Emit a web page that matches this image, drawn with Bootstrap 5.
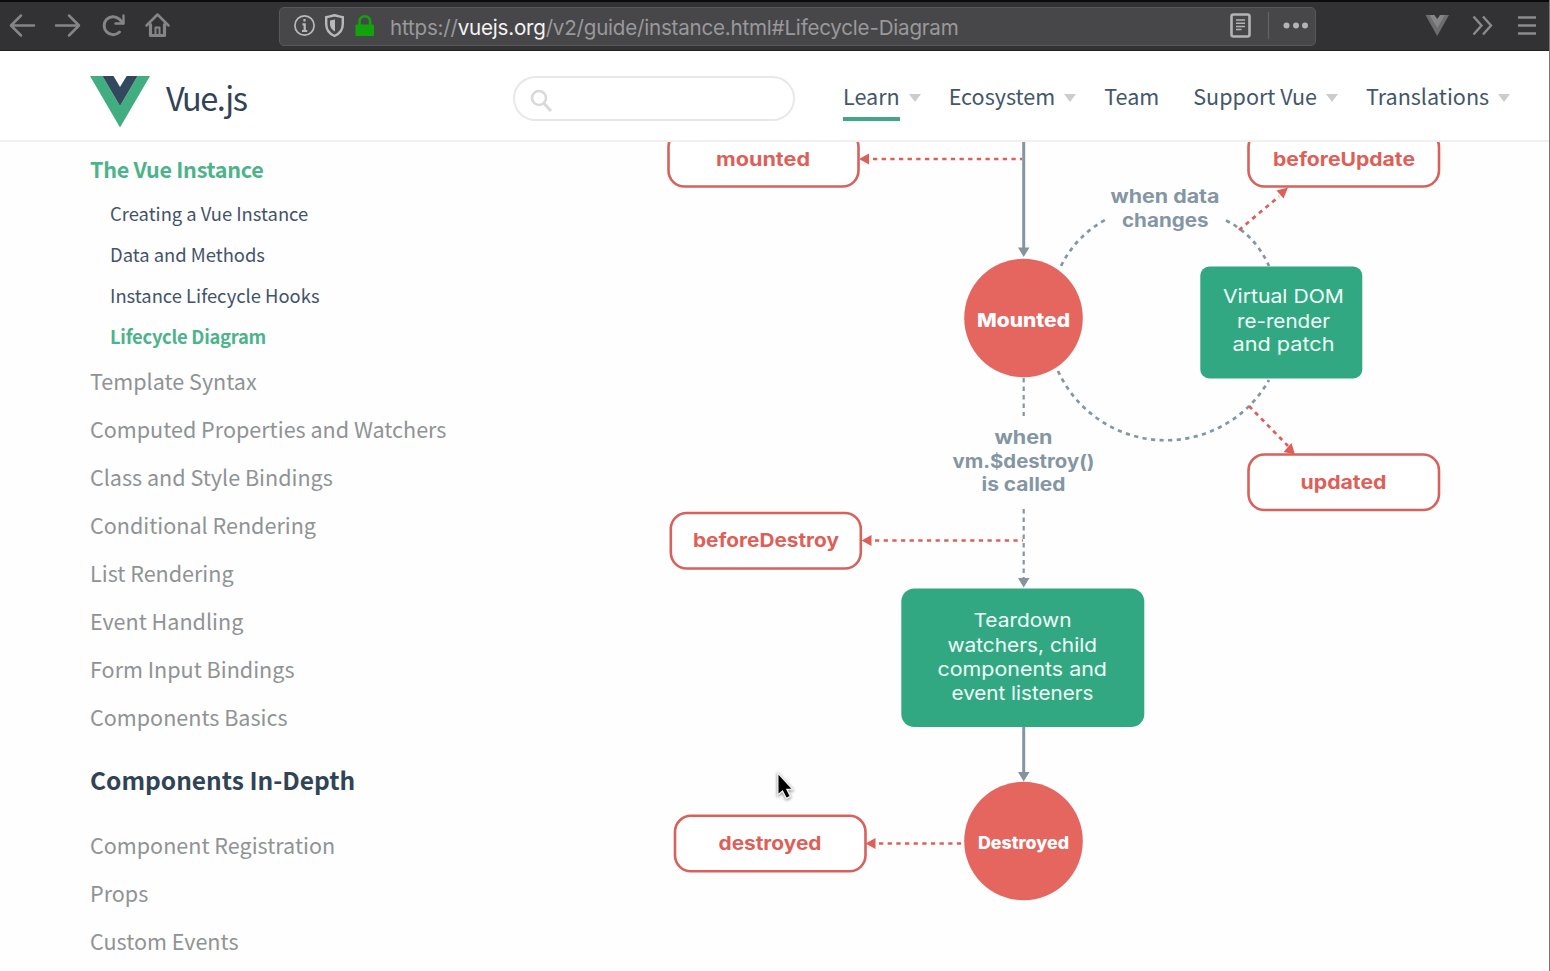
<!DOCTYPE html>
<html lang="en">
<head>
<meta charset="utf-8">
<meta name="viewport" content="width=device-width, initial-scale=1">
<title>The Vue Instance — Vue.js</title>
<link href="https://cdn.jsdelivr.net/npm/bootstrap@5.3.0/dist/css/bootstrap.min.css" rel="stylesheet">
<style>
  body { width: 1550px; height: 971px; overflow: hidden; background: #fefefe; font-family: "Noto Sans CJK SC", "Source Sans Pro", sans-serif; color: #304455; }
  a { text-decoration: none; color: inherit; }
  svg { display: block; flex: none; }
  .page-frame { height: 971px; border-right: 1px solid #77777a; }
  .chrome-bar { height: 51px; background: #323235; border-top: 2px solid #0b0b0d; border-bottom: 1px solid #222224; padding-left: 9px; }
  .url-field { width: 1037px; height: 39px; background: #474749; border: 1px solid #58585a; border-radius: 5px; font: 20.6px/36px Inter, sans-serif; color: #99999b; margin-left: 107px; padding-left: 13px; padding-right: 5px; }
  .url-field strong { color: #f4f4f4; font-weight: 400; }
  .url-text { margin-left: 15px; padding-top: 3px; letter-spacing: -0.22px; }
  .site-bar { height: 91px; background: #fff; border-bottom: 2px solid #f0f0f0; padding-left: 90px; }
  .site-bar .logo { margin-top: 12px; }
  .brand-name { font: 32.5px/50px "Noto Sans CJK SC", sans-serif; letter-spacing: -1.5px; margin-left: 16px; width: 100px; padding-top: 3px; }
  .search-pill { width: 282px; height: 45px; border: 2px solid #e8e8e8; border-radius: 23px; padding: 4px 0 0 15px; margin-left: 247px; margin-top: 6px; }
  .top-links { margin: 6px 0 0 48px; color: #43566a; }
  .top-link { font-size: 21.55px; line-height: 38px; height: 44px; border-bottom: 4px solid transparent; white-space: nowrap; }
  .top-link.current { border-color: #42a883; }
  .top-link.plain { margin-right: 34px; }
  .caret-down { width: 0; height: 0; border: 6px solid transparent; border-top: 8px solid #ccc; border-bottom: 0; margin: 0 28px 2px 9px; }
  .side-menu { width: 620px; padding: 4px 0 0 90px; font-size: 21.55px; color: #8f9394; }
  .side-menu a { display: block; height: 48px; line-height: 46px; white-space: nowrap; }
  .side-menu a.sub { height: 41px; line-height: 39px; font-size: 18.4px; padding-left: 20px; color: #43536a; }
  .side-menu a.on { color: #4db38b; font-weight: 700; letter-spacing: -0.27px; }
  .side-menu h3 { height: 80px; line-height: 76px; font-size: 24.5px; font-weight: 700; color: #304455; margin: 0; }
  .lifecycle text { font: 400 19px Inter, sans-serif; fill: #effff8; }
  .lifecycle .hook text, .lifecycle .state text, .lifecycle .note text { font-weight: 700; font-size: 18.8px; }
  .lifecycle .hook text { fill: #de5f58; }
  .lifecycle .state text { fill: #fff; font-weight: 800; }
  .lifecycle .state text.tight { font-size: 17px; }
  .lifecycle .note text { fill: #8496a3; }
  .pointer { filter: drop-shadow(0 1px 1.5px #0007); }
</style>
<script src="https://cdn.jsdelivr.net/npm/bootstrap@5.3.0/dist/js/bootstrap.bundle.min.js"></script>
</head>
<body>
<div class="page-frame d-flex flex-column">

  <header class="chrome-bar d-flex align-items-center">
    <svg width="163" height="34" viewBox="9 9 163 34" fill="none" stroke="#858587" stroke-width="2.5" stroke-linecap="round" stroke-linejoin="round">
      <path d="M34 25.5H12M21 15.5L11 25.5L21 35.5M56 25.5H78M69 15.5L79 25.5L69 35.5"/>
      <path d="M119.500 32A9 9 0 1 1 119 18.800L123 23" stroke-width="3"/><path d="M123.500 15.500V23.500H115.500" stroke-width="2.400"/>
      <path d="M146.500 25.500L157.500 14.500L168.500 25.500"/><path d="M150.500 24.500V35.500H164.500V24.500" stroke-width="3.200"/><path d="M155.500 35V27.500H159.500V35" stroke-width="2"/>
    </svg>
    <div class="url-field d-flex align-items-center">
      <svg width="82" height="30" viewBox="293 11 82 30" fill="none">
        <circle cx="304.500" cy="25.500" r="9.600" stroke="#b9b9bb" stroke-width="1.7"/>
        <path d="M304.500 19V21.600M302.500 24.300H304.700V31M302 31H307.200" stroke="#b9b9bb" stroke-width="2.2"/>
        <path d="M334.500 15.300C338 16 340.500 16.800 342.800 17.200V24C342.800 30 339 34 334.500 36C330 34 326.200 30 326.200 24V17.200C328.500 16.800 331 16 334.500 15.300Z" stroke="#b9b9bb" stroke-width="2.4"/>
        <path d="M335 19.500V31.500C331.500 30 330 27 330 24V20.500Z" fill="#b9b9bb"/>
        <path d="M359.500 25V21.500A5.300 5.300 0 0 1 370.100 21.500V25" stroke="#12a30c" stroke-width="2.600"/>
        <rect x="355.500" y="24.500" width="18.500" height="11.500" rx="1" fill="#12a30c"/>
      </svg>
      <span class="url-text">https://<strong>vuejs.org</strong>/v2/guide/instance.html#Lifecycle-Diagram</span>
      <svg class="ms-auto" width="84" height="34" viewBox="1226 9 84 34" fill="none">
        <rect x="1231.500" y="14.500" width="18" height="22" rx="2" stroke="#b4b4b6" stroke-width="2.6"/>
        <path d="M1236 20H1245M1236 23.200H1245M1236 26.400H1245M1236 29.600H1241.500" stroke="#b4b4b6" stroke-width="1.5"/>
        <path d="M1268.500 12V39" stroke="#626264" stroke-width="1.3"/>
        <g fill="#b4b4b6"><circle cx="1286.500" cy="25.500" r="3"/><circle cx="1296" cy="25.500" r="3"/><circle cx="1305" cy="25.500" r="3"/></g>
      </svg>
    </div>
    <svg class="ms-auto" width="128" height="34" viewBox="1421 9 128 34" fill="none" stroke="#8b8b8d" stroke-width="2.4">
      <path d="M1425.500 15H1432.500L1437 22L1441.500 15H1449L1437.200 36Z" fill="#6d6d70" stroke="none"/>
      <path d="M1432.500 15H1434.500L1437.200 19L1440 15H1445L1437.200 28L1429.500 15Z" fill="#858587" stroke="none"/>
      <path d="M1473.500 16.500L1481.500 25.500L1473.500 34.500M1483 16.500L1491 25.500L1483 34.500"/>
      <path d="M1518 17.500H1536M1518 25.500H1536M1518 33.500H1536"/>
    </svg>
  </header>

  <nav class="site-bar d-flex align-items-center">
    <svg class="logo" width="60" height="52" viewBox="0 0 60 52"><path d="M0 0H12.500L30 30L47.500 0H60L30 51.500Z" fill="#41ae82"/><path d="M12.500 0H23.500L30 11L36.700 0H47.500L30 30Z" fill="#33485d"/></svg>
    <a class="brand-name" href="#">Vue.js</a>
    <div class="search-pill d-flex align-items-center">
      <svg width="24" height="24" viewBox="0 0 24 24" fill="none" stroke="#d9d9d9" stroke-width="2.6"><circle cx="9" cy="9" r="7"/><path d="M14 14.500L21 22" stroke-width="3"/></svg>
    </div>
    <div class="top-links d-flex align-items-center">
      <a class="top-link current" href="#">Learn</a><i class="caret-down"></i>
      <a class="top-link" href="#">Ecosystem</a><i class="caret-down"></i>
      <a class="top-link plain" href="#">Team</a>
      <a class="top-link" href="#">Support Vue</a><i class="caret-down"></i>
      <a class="top-link" href="#">Translations</a><i class="caret-down"></i>
    </div>
  </nav>

  <main class="d-flex flex-grow-1 overflow-hidden">
    <aside class="side-menu flex-shrink-0">
      <a class="on" href="#">The Vue Instance</a>
      <a class="sub" href="#">Creating a Vue Instance</a>
      <a class="sub" href="#">Data and Methods</a>
      <a class="sub" href="#">Instance Lifecycle Hooks</a>
      <a class="sub on" href="#">Lifecycle Diagram</a>
      <a href="#">Template Syntax</a>
      <a href="#">Computed Properties and Watchers</a>
      <a href="#">Class and Style Bindings</a>
      <a href="#">Conditional Rendering</a>
      <a href="#">List Rendering</a>
      <a href="#">Event Handling</a>
      <a href="#">Form Input Bindings</a>
      <a href="#">Components Basics</a>
      <h3>Components In-Depth</h3>
      <a href="#">Component Registration</a>
      <a href="#">Props</a>
      <a href="#">Custom Events</a>
    </aside>

    <svg class="lifecycle" width="929" height="829" viewBox="620 142 929 829">
      <!-- main timeline -->
      <g stroke="#8496a3" fill="none" stroke-width="3">
        <path d="M1023.700 140V250M1023.700 726V774"/>
        <path d="M1023.700 378V416M1023.700 509V578" stroke-width="2.200" stroke-dasharray="4.500 4"/>
        <path d="M1061 266Q1076 236 1105 220M1226 220.500Q1255 235 1269 266M1058 371A118.500 118.500 0 0 0 1269 380" stroke-width="2.700" stroke-dasharray="4.200 4.400"/>
      </g>
      <path d="M1018 247.500H1029.500L1023.700 257ZM1018 578H1029.500L1023.700 587.500ZM1018 772H1029.500L1023.700 781.500Z" fill="#84939d"/>
      <!-- hook connectors -->
      <path d="M873 159H1022M875 540.500H1023M879 843.500H962M1239 230L1279 196.500M1249 406L1288 446" stroke="#de5f58" stroke-width="2.700" stroke-dasharray="4.300 4.350" fill="none"/>
      <path d="M859 159L869 153.500V164.500ZM861.500 540.500L871.500 535V546ZM865.500 843.500L875.500 838V849ZM1288 187.500L1283.500 198.500L1276.500 190.500ZM1295 454.500L1291.500 443L1283.500 452Z" fill="#de5f58"/>

      <g class="hook">
        <g fill="#fff" stroke="#d9615b" stroke-width="2.600">
          <rect x="668.500" y="131" width="190" height="55.500" rx="16"/>
          <rect x="1248.500" y="131" width="190.500" height="55.500" rx="16"/>
          <rect x="1248.500" y="454.500" width="190.500" height="55.500" rx="16"/>
          <rect x="670.800" y="513" width="190" height="55.500" rx="16"/>
          <rect x="675" y="815.800" width="190.500" height="55.500" rx="16"/>
        </g>
        <text x="716" y="165.500" textLength="94" lengthAdjust="spacingAndGlyphs">mounted</text>
        <text x="1273" y="165.500" textLength="142" lengthAdjust="spacingAndGlyphs">beforeUpdate</text>
        <text x="1300.500" y="488.500" textLength="86" lengthAdjust="spacingAndGlyphs">updated</text>
        <text x="693" y="546.500" textLength="146" lengthAdjust="spacingAndGlyphs">beforeDestroy</text>
        <text x="718.500" y="849.500" textLength="103" lengthAdjust="spacingAndGlyphs">destroyed</text>
      </g>

      <g class="state">
        <circle cx="1023.500" cy="318" r="59.300" fill="#e4665f"/>
        <circle cx="1023.500" cy="841" r="59.300" fill="#e4665f"/>
        <text x="977" y="326.500" textLength="93" lengthAdjust="spacingAndGlyphs">Mounted</text>
        <text class="tight" x="978" y="848.800" textLength="91" lengthAdjust="spacingAndGlyphs">Destroyed</text>
      </g>

      <g class="note">
        <text x="1110.500" y="202.800" textLength="109" lengthAdjust="spacingAndGlyphs">when data</text>
        <text x="1122" y="226.500" textLength="86.500" lengthAdjust="spacingAndGlyphs">changes</text>
        <text x="994.500" y="443.500" textLength="58" lengthAdjust="spacingAndGlyphs">when</text>
        <text x="952.500" y="467.500" textLength="142" lengthAdjust="spacingAndGlyphs">vm.$destroy()</text>
        <text x="981.500" y="491.300" textLength="84" lengthAdjust="spacingAndGlyphs">is called</text>
      </g>

      <g>
        <rect x="1200.300" y="266.500" width="162" height="112" rx="9" fill="#32a882"/>
        <rect x="901.300" y="588.500" width="243" height="138.500" rx="13" fill="#32a882"/>
        <text x="1223" y="303.300" textLength="121" lengthAdjust="spacingAndGlyphs">Virtual DOM</text>
        <text x="1237" y="327.500" textLength="93" lengthAdjust="spacingAndGlyphs">re-render</text>
        <text x="1232.500" y="351.200" textLength="102" lengthAdjust="spacingAndGlyphs">and patch</text>
        <text x="973.500" y="627.200" textLength="98" lengthAdjust="spacingAndGlyphs">Teardown</text>
        <text x="947.500" y="651.500" textLength="149.500" lengthAdjust="spacingAndGlyphs">watchers, child</text>
        <text x="937.500" y="675.500" textLength="169.500" lengthAdjust="spacingAndGlyphs">components and</text>
        <text x="951.500" y="699.500" textLength="142" lengthAdjust="spacingAndGlyphs">event listeners</text>
      </g>

      <!-- mouse pointer -->
      <path class="pointer" d="M777.800 773V795L782.500 791L786.300 798.500L790.500 796.500L787 789.500H793Z" fill="#000" stroke="#eee" stroke-width="1.400"/>
    </svg>
  </main>
</div>
</body>
</html>
